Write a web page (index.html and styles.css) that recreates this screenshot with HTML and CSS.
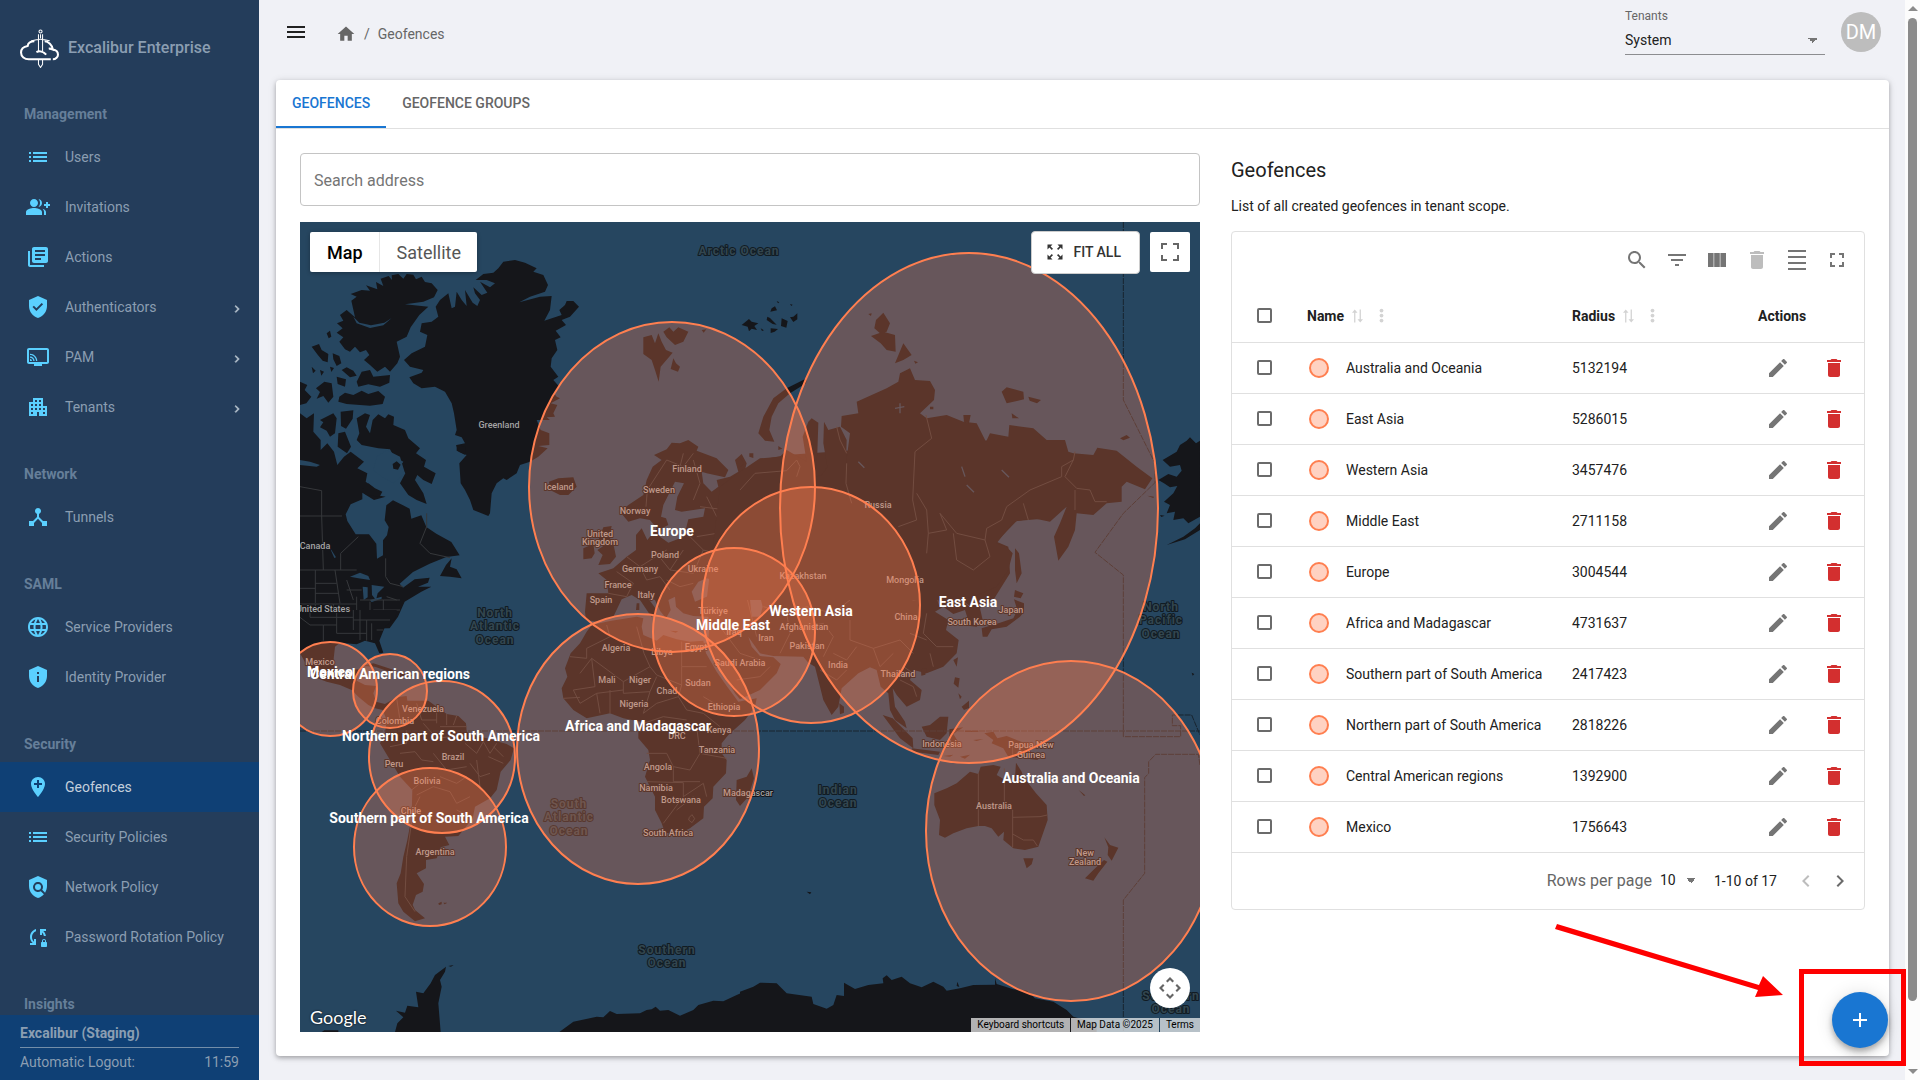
FILE: index.html
```html
<!DOCTYPE html>
<html lang="en">
<head>
    <meta charset="UTF-8">
    <meta name="viewport" content="width=device-width, initial-scale=1.0">
    <title>Geofences</title>
    <link rel="stylesheet" href="styles.css">
</head>
<body>
<svg class="sprite" aria-hidden="true">
    <symbol id="i-menu" viewBox="0 0 24 24"><path d="M3 18h18v-2H3v2zm0-5h18v-2H3v2zm0-7v2h18V6H3z"/></symbol>
    <symbol id="i-home" viewBox="0 0 24 24"><path d="M10 20v-6h4v6h5v-8h3L12 3 2 12h3v8z"/></symbol>
    <symbol id="i-list" viewBox="0 0 24 24"><path d="M3 13h2v-2H3v2zm0 4h2v-2H3v2zm0-8h2V7H3v2zm4 4h14v-2H7v2zm0 4h14v-2H7v2zM7 7v2h14V7H7z"/></symbol>
    <symbol id="i-invite" viewBox="0 0 24 24"><path d="M22 9V7h-2v2h-2v2h2v2h2v-2h2V9zM8 12c2.21 0 4-1.79 4-4s-1.79-4-4-4-4 1.79-4 4 1.79 4 4 4zm0 1c-2.67 0-8 1.34-8 4v3h16v-3c0-2.66-5.33-4-8-4zm4.51-8.95C13.43 5.11 14 6.49 14 8s-.57 2.89-1.49 3.95C14.47 11.7 16 10.04 16 8s-1.53-3.7-3.49-3.95zm4.02 9.78C17.42 14.66 18 15.7 18 17v3h2v-3c0-1.45-1.59-2.51-3.47-3.17z"/></symbol>
    <symbol id="i-actions" viewBox="0 0 24 24"><path d="M4 6H2v14c0 1.1.9 2 2 2h14v-2H4V6zm16-4H8c-1.1 0-2 .9-2 2v12c0 1.1.9 2 2 2h12c1.1 0 2-.9 2-2V4c0-1.1-.9-2-2-2zm-1 9H9V9h10v2zm-4 4H9v-2h6v2zm4-8H9V5h10v2z"/></symbol>
    <symbol id="i-shield" viewBox="0 0 24 24"><path d="M12 1L3 5v6c0 5.55 3.84 10.74 9 12 5.16-1.26 9-6.45 9-12V5l-9-4zm-1.6 15l-3.9-3.9 1.4-1.4 2.5 2.5 5.3-5.3 1.4 1.4-6.7 6.7z"/></symbol>
    <symbol id="i-pam" viewBox="0 0 24 24"><path d="M21 3H3c-1.1 0-2 .9-2 2v12c0 1.1.9 2 2 2h5v2h8v-2h5c1.1 0 2-.9 2-2V5c0-1.1-.9-2-2-2zm0 14H3V5h18v12zM4 14v2h2c0-1.11-.89-2-2-2zm0-2.6v1.3c1.9 0 3.3 1.4 3.3 3.3h1.3c0-2.5-2.1-4.6-4.6-4.6zM4 8.7V10c3.3 0 6 2.7 6 6h1.3c0-4-3.3-7.3-7.3-7.3z"/></symbol>
    <symbol id="i-tenants" viewBox="0 0 24 24"><path d="M17 11V3H7v4H3v14h8v-4h2v4h8V11h-4zM7 19H5v-2h2v2zm0-4H5v-2h2v2zm0-4H5V9h2v2zm4 4H9v-2h2v2zm0-4H9V9h2v2zm0-4H9V5h2v2zm4 8h-2v-2h2v2zm0-4h-2V9h2v2zm0-4h-2V5h2v2zm4 12h-2v-2h2v2zm0-4h-2v-2h2v2z"/></symbol>
    <symbol id="i-tunnels" viewBox="0 0 24 24"><path d="M17 16l-4-4V8.82C14.16 8.4 15 7.3 15 6c0-1.66-1.34-3-3-3S9 4.34 9 6c0 1.3.84 2.4 2 2.82V12l-4 4H3v5h5v-3.05l4-4.2 4 4.2V21h5v-5h-4z"/></symbol>
    <symbol id="i-globe" viewBox="0 0 24 24"><path d="M11.99 2C6.47 2 2 6.48 2 12s4.47 10 9.99 10C17.52 22 22 17.52 22 12S17.52 2 11.99 2zm6.93 6h-2.95c-.32-1.25-.78-2.45-1.38-3.56 1.84.63 3.37 1.91 4.33 3.56zM12 4.04c.83 1.2 1.48 2.53 1.91 3.96h-3.82c.43-1.43 1.08-2.76 1.91-3.96zM4.26 14C4.1 13.36 4 12.69 4 12s.1-1.36.26-2h3.38c-.08.66-.14 1.32-.14 2 0 .68.06 1.34.14 2H4.26zm.82 2h2.95c.32 1.25.78 2.45 1.38 3.56-1.84-.63-3.37-1.9-4.33-3.56zm2.95-8H5.08c.96-1.66 2.49-2.93 4.33-3.56C8.81 5.55 8.35 6.75 8.03 8zM12 19.96c-.83-1.2-1.48-2.53-1.91-3.96h3.82c-.43 1.43-1.08 2.76-1.91 3.96zM14.34 14H9.66c-.09-.66-.16-1.32-.16-2 0-.68.07-1.35.16-2h4.68c.09.65.16 1.32.16 2 0 .68-.07 1.34-.16 2zm.25 5.56c.6-1.11 1.06-2.31 1.38-3.56h2.95c-.96 1.65-2.49 2.93-4.33 3.56zM16.36 14c.08-.66.14-1.32.14-2 0-.68-.06-1.34-.14-2h3.38c.16.64.26 1.31.26 2s-.1 1.36-.26 2h-3.38z"/></symbol>
    <symbol id="i-identity" viewBox="0 0 24 24"><path d="M12 1L3 5v6c0 5.55 3.84 10.74 9 12 5.16-1.26 9-6.45 9-12V5l-9-4zm-1 6h2v2h-2V7zm0 4h2v6h-2v-6z"/></symbol>
    <symbol id="i-pin" viewBox="0 0 24 24"><path d="M12 2C8.14 2 5 5.14 5 9c0 5.25 7 13 7 13s7-7.75 7-13c0-3.86-3.14-7-7-7zm4 8h-3v3h-2v-3H8V8h3V5h2v3h3v2z"/></symbol>
    <symbol id="i-policy" viewBox="0 0 24 24"><path d="M21 5l-9-4-9 4v6c0 5.55 3.84 10.74 9 12 2.3-.56 4.33-1.9 5.88-3.71l-3.12-3.12c-1.94 1.29-4.58 1.07-6.29-.64-1.95-1.95-1.95-5.12 0-7.07 1.95-1.95 5.12-1.95 7.07 0 1.71 1.71 1.92 4.35.64 6.29l2.9 2.9C20.29 15.69 21 13.38 21 11V5z"/><circle cx="12" cy="12" r="3"/></symbol>
    <symbol id="i-rotation" viewBox="0 0 24 24"><path d="M10 4.1v2.1C7.7 7 6 9.3 6 12c0 2 .9 3.600 2 4.700V14h2v6H4v-2h2.700C5 16.500 4 14.400 4 12c0-3.700 2.500-6.900 6-7.900zM14 4h6v2h-2.700c1.400 1.200 2.300 2.900 2.600 5h-2c-.3-1.500-1-2.700-1.900-3.600V10h-2zM20 17v-1c0-1.100-.9-2-2-2s-2 .9-2 2v1c-.6 0-1 .4-1 1v3c0 .6.4 1 1 1h4c.6 0 1-.4 1-1v-3c0-.6-.4-1-1-1zm-1 0h-2v-1c0-.6.400-1 1-1s1 .4 1 1z"/></symbol>
    <symbol id="i-chevron" viewBox="0 0 24 24"><path d="M10 6L8.590 7.410 13.170 12l-4.580 4.590L10 18l6-6z"/></symbol>
    <symbol id="i-search" viewBox="0 0 24 24"><path d="M15.500 14h-.790l-.280-.270C15.410 12.590 16 11.110 16 9.500 16 5.910 13.090 3 9.500 3S3 5.910 3 9.500 5.910 16 9.500 16c1.610 0 3.090-.590 4.230-1.570l.270.280v.790l5 4.990L20.490 19l-4.990-5zm-6 0C7.010 14 5 11.990 5 9.500S7.010 5 9.500 5 14 7.010 14 9.500 11.990 14 9.500 14z"/></symbol>
    <symbol id="i-filter" viewBox="0 0 24 24"><path d="M10 18h4v-2h-4v2zM3 6v2h18V6H3zm3 7h12v-2H6v2z"/></symbol>
    <symbol id="i-columns" viewBox="0 0 24 24"><path d="M3 5h5.600v14H3zM9.200 5h5.600v14H9.200zM15.400 5H21v14h-5.600z"/></symbol>
    <symbol id="i-delete" viewBox="0 0 24 24"><path d="M6 19c0 1.100.9 2 2 2h8c1.100 0 2-.9 2-2V7H6v12zM19 4h-3.500l-1-1h-5l-1 1H5v2h14V4z"/></symbol>
    <symbol id="i-density" viewBox="0 0 24 24"><path d="M3 2h18v2H3zM3 8h18v2H3zM3 14h18v2H3zM3 20h18v2H3z"/></symbol>
    <symbol id="i-fullscreen" viewBox="0 0 24 24"><path d="M7 14H5v5h5v-2H7v-3zm-2-4h2V7h3V5H5v5zm12 7h-3v2h5v-5h-2v3zM14 5v2h3v3h2V5h-5z"/></symbol>
    <symbol id="i-edit" viewBox="0 0 24 24"><path d="M3 17.250V21h3.750L17.810 9.940l-3.750-3.750L3 17.250zM20.710 7.040c.39-.39.39-1.020 0-1.410l-2.340-2.340c-.39-.39-1.020-.39-1.410 0l-1.830 1.830 3.750 3.750 1.830-1.830z"/></symbol>
    <symbol id="i-sort" viewBox="0 0 12 14"><path d="M2.300 14V3.500H0L3 0l3 3.500H3.700V14zM8.300 0v10.500H6L9 14l3-3.500H9.700V0z"/></symbol>
    <symbol id="i-more" viewBox="0 0 24 24"><circle cx="12" cy="4" r="3"/><circle cx="12" cy="12" r="3"/><circle cx="12" cy="20" r="3"/></symbol>
    <symbol id="i-fit" viewBox="0 0 24 24"><path d="M15 3l2.300 2.300-2.890 2.870 1.420 1.420L18.700 6.700 21 9V3zM3 9l2.300-2.300 2.870 2.890 1.420-1.420L6.700 5.300 9 3H3zm6 12l-2.300-2.300 2.890-2.870-1.420-1.420L5.300 17.300 3 15v6zm12-6l-2.300 2.300-2.870-2.890-1.420 1.420 2.890 2.870L15 21h6z"/></symbol>
    <symbol id="i-add" viewBox="0 0 24 24"><path d="M19 13h-6v6h-2v-6H5v-2h6V5h2v6h6v2z"/></symbol>
</svg>

<div class="layout">
    <aside class="sidebar">
        <div class="brand">
            <svg class="brand-logo" viewBox="0 0 38 38">
                <path class="cloud" d="M30 29.500H8.500C4.500 29.500 1 27 1 23s3-6 6.500-6.500C8 13 11 12 14 12M24 12c3.500 0 7.500 3.500 8 8-1.500-.8-3-1-4-.8M32 20c3.500.5 5 3 5 5s-2 4.500-5 4.500M16 22.500c3-1.500 7-.5 9.500 2.500"/>
                <path class="sword" d="M18 5v17M22 5v17M18 29.500v5l2 3 2-3v-5M11 11.500c3 0 5-1.500 9-1.500s6 1.500 9 1.500M20 5v4"/>
                <circle class="sword" cx="20" cy="2.500" r="1.500"/>
            </svg>
            <span>Excalibur Enterprise</span>
        </div>
        <nav>
            <h2 class="nav-title">Management</h2>
            <a class="nav-item" href="#"><svg class="icon"><use href="#i-list"/></svg>Users</a>
            <a class="nav-item" href="#"><svg class="icon"><use href="#i-invite"/></svg>Invitations</a>
            <a class="nav-item" href="#"><svg class="icon"><use href="#i-actions"/></svg>Actions</a>
            <a class="nav-item" href="#"><svg class="icon"><use href="#i-shield"/></svg>Authenticators<svg class="arrow"><use href="#i-chevron"/></svg></a>
            <a class="nav-item" href="#"><svg class="icon"><use href="#i-pam"/></svg>PAM<svg class="arrow"><use href="#i-chevron"/></svg></a>
            <a class="nav-item" href="#"><svg class="icon"><use href="#i-tenants"/></svg>Tenants<svg class="arrow"><use href="#i-chevron"/></svg></a>
            <h2 class="nav-title">Network</h2>
            <a class="nav-item" href="#"><svg class="icon"><use href="#i-tunnels"/></svg>Tunnels</a>
            <h2 class="nav-title">SAML</h2>
            <a class="nav-item" href="#"><svg class="icon"><use href="#i-globe"/></svg>Service Providers</a>
            <a class="nav-item" href="#"><svg class="icon"><use href="#i-identity"/></svg>Identity Provider</a>
            <h2 class="nav-title">Security</h2>
            <a class="nav-item active" href="#"><svg class="icon"><use href="#i-pin"/></svg>Geofences</a>
            <a class="nav-item" href="#"><svg class="icon"><use href="#i-list"/></svg>Security Policies</a>
            <a class="nav-item" href="#"><svg class="icon"><use href="#i-policy"/></svg>Network Policy</a>
            <a class="nav-item" href="#"><svg class="icon"><use href="#i-rotation"/></svg>Password Rotation Policy</a>
            <h2 class="nav-title">Insights</h2>
        </nav>
        <div class="session">
            <div class="session-name">Excalibur (Staging)</div>
            <div class="session-logout"><span>Automatic Logout:</span><span>11:59</span></div>
        </div>
    </aside>

    <main class="main">
        <header class="topbar">
            <button class="menu-button" type="button" aria-label="Toggle menu"><svg class="icon"><use href="#i-menu"/></svg></button>
            <div class="breadcrumb">
                <a href="#" aria-label="Home"><svg class="icon"><use href="#i-home"/></svg></a>
                <span>/</span>
                <span>Geofences</span>
            </div>
            <div class="tenant">
                <label for="tenant">Tenants</label>
                <select id="tenant"><option>System</option></select>
            </div>
            <div class="avatar">DM</div>
        </header>

        <section class="card">
            <div class="tabs">
                <button class="tab selected" type="button">GEOFENCES</button>
                <button class="tab" type="button">GEOFENCE GROUPS</button>
            </div>
            <div class="content">
                <div class="map-column">
                    <input class="search" type="text" placeholder="Search address" aria-label="Search address">
                    <div class="map">
                        <svg class="map-canvas" viewBox="300 222 900 810" preserveAspectRatio="xMidYMid slice">
                            <rect class="sea" x="300" y="222" width="900" height="810"/>

                            <!-- Arctic Canada, Greenland, North America -->
                            <g transform="translate(290 200) scale(.33333)">
                                <path class="land" d="M184 302L200 290 182 282 215 270 240 272 228 256 262 268 258 246 280 258 272 236 296 228 306 240 305 226 325 222 340 236 350 222 370 224 378 238 395 230 405 246 425 250 443 270 432 292 400 305 345 313 415 320 388 345 362 382 350 410 320 425 330 470 322 490 300 515 285 500 262 515 240 495 222 480 238 465 228 450 210 457 195 440 180 455 165 448 148 425 160 412 140 398 158 385 141 370 160 362 150 345 170 330 195 352Z"/>
                                <path class="land" d="M557 240L580 222 610 218 625 205 640 185 675 180 705 188 740 205 730 215 760 225 774 255 765 275 720 290 688 307 750 290 785 288 780 330 763 362 815 345 808 330 825 315 830 303 850 303 867 320 840 350 815 360 828 375 797 392 812 412 795 420 802 450 785 475 782 500 805 530 790 540 808 560 792 580 800 590 810 595 782 610 802 615 790 640 795 650 770 652 780 660 740 660 752 690 778 700 778 735 745 738 773 745 745 770 720 785 690 795 680 820 650 840 640 835 620 850 605 880 600 940 595 948 550 930 540 900 525 870 512 850 508 790 530 765 500 752 500 735 525 730 515 712 495 705 500 690 492 640 485 610 465 575 435 560 395 565 370 550 358 532 395 518 400 510 360 500 342 480 365 460 405 440 412 405 390 395 395 370 425 365 445 350 437 320 450 300 475 280 485 325 495 320 500 275 515 300 530 318 525 270 548 308 562 318 570 300 555 280 550 262 575 285 592 278 570 245 600 262 615 250 590 240Z"/>
                                <path class="land" d="M65 440l22-8 8 18 20 12 -2 25-15-5 -15-18zM128 460l20 8 6 22-14 8 -10-20zM110 400l10-8 4 18-8 5zM120 500l12 4 -8 12zM155 510l15-8 20 10 10 15-20 5zM200 545L215 515 240 510 250 530 300 525 298 548 270 560 235 553 205 560zM148 590L165 578 190 585 215 572 235 582 265 573 285 590 278 612 240 617 170 612 145 605zM78 565l25-20 22 5 5 40-15 18-15-20-20 8 10-20zM30 545l22 10 -8 15 20 20 -15 20 -19 5zM140 530l28 8 -3 22-22-8zM65 500l12 12-8 8zM90 510l12 5-8 12z"/>
                                <path class="land" d="M200 655L225 640 240 645 228 680 240 700 248 660 265 643 285 655 295 643 312 650 310 675 345 690 355 715 390 745 378 760 408 780 402 800 437 820 425 852 400 840 382 825 375 840 400 880 410 912 380 900 355 885 330 850 346 820 330 800 340 785 312 770 300 748 265 745 215 735 200 720 208 700Z"/>
                                <path class="land" d="M90 660l40-20 10 15-5 45-15 10-10-18-20-10 10-15zM152 635l38-4 -2 25-20 30 -15-8zM145 700l20-5 18 45-12 20-28-20zM30 640l20 15 22-15 -2 55 22 25 0 30 20-20 20 25 10 40 20-25 20-15 40 30-20 20 30 15 -5 25 20 15 10 25 30 5 -35 10-35-22 0 20-35 15-15 30 5 20 25 40 40 0 22 28 2 45 18-10 0-45 12-15 5-25-12-20 5-45 20-15 30 15 20 10 5 30 30-10 15 35 30 20 45 25 25 40-40 5-50 20-50 25-40 35 10 12 35-25 45-5-5 15-30 12 40 0-30 15-50 30-20 45-25 35-300 5z"/>
                                <path class="land" d="M450 1128L468 1095 485 1075 480 1100 500 1108 515 1135 480 1130ZM215 870l20-20 20 15 22 10 -8 15-40-5z"/>
                                <path class="water" d="M190 350l10 20 40 14 40-8 25-22 -22 14 -40 8 -35-8zM30 780l30 5 30 10-10 5-50-5zM290 750l40 20 15 50-35 30-35-20-25-20 10-40zM180 1130l30-12 25 10 5 12-35-5zM218 1160l15 2 0 30-12 8zM245 1155l38 5 -20 20-5 20-12-15zM240 1200l35-10 0 6-30 10zM118 1040l20 32-5 2z"/>
                                <path class="land" d="M308 792l12-8 12 10-8 15-14-3zM498 735l28 5 0 25-20-10z"/>
                                <path class="border" d="M30 860L95 872V948M30 948H156M95 948L100 1110M30 1110H200M152 1110V1060L205 1010M287 1075V1130L300 1150 340 1160M410 940V980L390 1030 420 1060 480 1073M76 1110V1210M76 1150H140M76 1180H145M135 1110L150 1210M30 1165H76M76 1212H200M170 1140L190 1200M210 1200H330M30 1212L76 1212V1260M130 1212V1260M200 1190V1260M240 1205V1230M290 1190L320 1200M250 1230H330M280 1200V1260M170 1170H215M60 1255H300"/>
                            </g>

                            <!-- Americas and Africa -->
                            <g transform="translate(290 610) scale(.33333)">
                                <path class="land" d="M30 0H320L316 25 285 50 275 75 268 92 280 128 268 130 255 100 225 92 200 103 150 98 135 110 130 155 140 190 175 195 185 180 205 178 200 212 225 225 258 228 250 250 258 275 285 282 320 262 350 258 352 272 415 272 440 290 470 312 505 318 528 340 530 365 550 375 590 385 650 402 672 415 662 450 632 485 620 540 600 565 555 590 548 625 520 660 505 678 465 680 478 705 452 712 440 745 408 750 408 775 380 790 402 822 398 845 378 855 368 885 375 900 405 925 375 934 340 905 325 880 320 820 332 790 340 740 352 690 365 620 367 540 330 500 300 450 270 400 285 370 290 330 278 300 255 295 235 285 205 260 185 240 150 225 110 215 70 200 50 165 30 130Z"/>
                                <path class="land" d="M218 168L250 160 312 180 300 186 255 170ZM318 190l30-4 20 12-45 4zM445 880l10-5 0 8-8 2zM460 878l12 0-8 5zM645 915l12 6z"/>
                                <path class="border" d="M30 22L60 45H100V92M60 0V22H190M100 45H140M140 0V70M190 0V60M140 70H230M210 0V90M230 30V92M245 40V90M190 30H300M260 60H280M320 265L330 330 285 345M380 280L395 330 440 330M440 290V340M470 312V345M500 318L490 345M330 430L375 425 395 450 430 455M300 410L350 400 350 360M400 340L440 385 520 375M450 350L530 350M525 400L560 430 580 395 600 430 620 400M540 460L570 500 600 490M380 555L430 530 480 545 500 580 540 560M500 600L540 620M390 560L370 600 350 740 345 860 375 905M365 540L390 520M430 430L470 480 530 470M450 500L500 520 530 500M610 410L640 440M595 440L640 460M560 450L570 530"/>
                                <path class="land" d="M315 1266L322 1240 340 1222 318 1202 345 1208 352 1187 385 1192 378 1145 400 1150 422 1120 435 1095 468 1070 465 1085 450 1110 455 1130 445 1180 452 1266ZM475 1068l16-3-8 5zM95 1266l8-5h42v5zM420 1092l4-6z"/>
                                <path class="land" d="M808 1266L850 1235 920 1220 940 1222 960 1203 980 1212 1050 1210 1070 1200 1085 1198 1097 1190 1110 1202 1135 1200 1170 1217 1210 1200 1225 1185 1270 1172 1300 1174 1340 1155 1380 1138V1266Z"/>
                                <path class="land" d="M905 45L960 33 1040 20 1060 25 1055 50 1060 75 1100 92 1120 75 1160 88 1200 95 1240 92 1248 130 1280 185 1310 228 1345 275 1400 265 1395 290 1365 330 1315 375 1295 400 1295 430 1310 450 1308 490 1270 530 1268 565 1242 590 1240 625 1200 655 1165 672 1125 668 1115 640 1095 600 1095 560 1065 500 1080 450 1075 420 1045 385 1045 355 1052 335 1000 325 960 310 890 325 850 300 820 265 815 235 832 200 825 175 842 130 870 100 890 65Z"/>
                                <path class="land" d="M1340 510L1370 500 1385 475 1392 505 1375 560 1350 588 1338 570Z"/>
                                <path class="border" d="M840 140L890 145V115L960 80 950 45M905 145L1000 215 1080 170 1062 130 1040 50M905 145L915 230 850 240M1080 170L1100 195 1175 225M1175 95V170H1250M1175 170V225L1165 260 1190 300 1240 310M850 240L870 280 920 250 1000 240M920 250L930 310M960 240V310M1000 215V250L1080 245 1100 200M1080 245L1060 310 1100 280 1165 260M1060 340L1120 320 1190 330M1070 430L1130 430 1150 470 1200 480 1230 430 1220 350M1150 470L1150 515 1230 515M1070 515L1180 518V560L1150 600 1120 640M1180 560L1240 520 1250 560M1230 430L1310 445M1240 310L1290 350M1160 600L1210 560M1240 260L1290 290M870 190L905 145M820 265L870 262"/>
                                <path class="border" d="M1198 622l8-8 8 12-8 12-10-8z"/>
                            </g>

                            <!-- Europe and southern Asia -->
                            <g transform="translate(560 440) scale(.33333)">
                                <path class="land" d="M180 215L205 195 250 165 260 120 278 80 305 60 282 45 320 28 335 8 360 10 385 0 415 20 410 32 470 55 505 90 495 112 440 100 425 95 430 130 455 155 475 140 470 120 510 110 535 95 525 60 545 42 560 70 555 90 600 60 680 45 1440-10 1440 237 1370 243 1310 305 1345 320 1350 400 1300 480 1260 505 1268 540 1250 560 1230 558 1215 510 1180 522 1150 500 1125 515 1165 540 1158 570 1196 600 1190 640 1150 680 1100 700 1060 690 1050 720 1085 750 1080 780 1040 800 1010 765 998 745 1005 800 1035 845 1040 865 1005 840 990 810 985 760 962 740 950 690 930 682 895 700 845 745 835 800 815 825 790 780 765 680 745 668 730 650 640 648 600 640 565 590 575 620 600 648 640 652 662 672 650 700 600 750 540 778 525 760 495 710 455 640 445 600 448 560 445 530 400 528 370 520 348 500 345 470 325 480 332 510 318 535 300 512 285 480 262 472 290 510 275 532 240 480 215 465 185 478 160 530 110 545 78 540 75 515 80 460 145 460 140 420 115 400 160 385 200 350 228 330 228 285 245 265 262 300 290 265 270 240 240 235 205 245Z"/>
                                <path class="land" d="M130 262L155 258 148 290 162 320 168 350 150 372 115 375 128 345 112 330 130 318 115 300ZM70 325L100 312 104 340 95 355 70 358ZM-33 125L-5 115 40 112 50 140 25 165 0 165-30 150ZM230 490h8v20h-10zM330 572l25 2-8 4z"/>
                                <path class="land" d="M1392 490L1362 478 1372 510 1360 535 1320 548 1265 565 1268 590 1282 590 1295 568 1340 560 1380 530 1392 515ZM1365 450l25 10-8 15-20-5zM1365 325l12 15 8 60-15 30-5-40zM1180 660l14-8-4 28zM1083 688l18-4-5 20-12 3zM838 790l14 10 0 18-12 5zM968 825l30 10 60 60 2 30-40-30zM1055 925l85 10-5 10-75-10zM1085 860l25-5 30-25 25 0-5 50-20 20-40-10zM1168 868l42-6-30 20 15 25-12 8-15-20zM1185 712l14 3-4 28-14-12zM1205 800l22-18 0 22-15 6zM1195 760l10 10-5 8zM1235 865l8 15z"/>
                                <path class="water" d="M345 125L372 130 352 170 345 210 365 215 435 205 430 230 385 238 372 290 325 308 300 290 305 265 325 255 318 235 303 230 310 195ZM395 455L415 425 440 415 480 425 500 460 490 480 440 470 405 485ZM560 435L590 420 610 435 598 460 608 500 600 530 575 530 570 480ZM780 435l8-10 40-5 0 4zM1055 360l25-30 8-30 2 5-10 35z"/>
                                <path class="border" d="M258 200L262 150 320 60 370 80 400 40M400 60L420 130 400 180M360 80L370 40M200 350L240 380 260 420 300 410M145 460L200 470 220 430 170 395M240 380L320 330M290 340L330 390 370 330M320 420L360 440 400 430M330 390L400 400 430 330 380 280M300 410L330 450M410 290L470 280 500 240 560 230 600 300 560 370 500 390 490 420M430 330L500 350 540 320 600 340M420 200L500 210 540 150 600 180 660 150 700 60 720 90M440 170L470 230 530 250M560 120L600 95H680M600 180L620 240 680 250 700 320 660 380 610 420M640 210L700 200 720 260M700 320L740 350 790 300 850 320 870 350 910 340 900 290 860 230 800 210M760 160L830 190 870 160 890 200 920 290 980 250 1000 300 1040 330 1080 310 1120 340 1200 300 1240 330 1300 300 1320 230 1350 200 1440 150M1080 310L1100 350 1170 360 1200 400 1240 440 1280 380 1300 330M830 30L860 100 855 160M1060 60L1075 150 1060 250M700 440L760 420 820 460 860 450 890 390 960 450 1060 480 1130 470 1200 400M890 390L830 400 780 430M610 500L680 520 740 500 820 520 870 480M680 520L690 580 660 640M740 560L790 550 820 590 790 650M870 540L870 600 940 625 1020 600 1060 640M940 625L960 680 1000 640M820 640L860 660 890 620M780 690L830 720 860 690M1030 680L1060 700M1020 720L1060 740 1070 770M1100 520L1090 580 1130 620 1180 620M1050 580L1100 600M1110 640L1120 680M500 470L560 470 590 590M480 560L540 640 600 660M530 720L600 710 630 680M440 500L500 510M1130 470L1140 500M1180 460L1230 500M640 470L700 480M660 400L740 400 800 380M500 400L560 380 540 440"/>
                            </g>

                            <!-- Siberia, Arctic islands, Alaska -->
                            <g transform="translate(740 200) scale(.33333)">
                                <path class="land" d="M-60 860L0 815 60 775 120 770 140 750 200 785 188 710 205 665 215 655 235 668 232 760 225 830 245 825 262 800 250 730 252 665 265 690 300 680 320 720 318 790 330 700 303 680 305 648 355 640 350 605 440 565 475 545 480 520 510 505 525 540 570 543 585 570 582 600 540 640 560 655 620 645 670 665 710 670 738 725 750 700 805 710 808 675 880 685 920 720 975 720 985 755 1000 760 1060 765 1072 743 1130 752 1190 800 1237 835 1215 868 1160 845 1145 860 1145 905 1100 910 1060 945 1010 940 1005 990 985 1040 955 1082 942 1010 960 970 980 920 930 965 880 955 820 965 770 1030 800 1040 818 1060 805 1110 770 1160 700 1190 650 1200-100 1200Z"/>
                                <path class="land" d="M430 338L450 370 440 395 420 400 403 385 408 360ZM393 408L430 395 465 405 467 455 440 450 422 430ZM490 430L515 465 490 480 465 490ZM522 482l12 5-8 4zM785 575L800 562 850 575 852 598 800 610ZM865 590l38 10-12 10-22-8zM815 640l22 15-20 0zM670 645l22 0-5 25-15-5zM1140 715l20-10 10 8-20 8zM570 620l10 0 0 8-10 0zM385 342l10-2-2 8zM55 700L70 650 100 595 140 565 200 535 198 550 150 580 115 610 95 650 88 690 103 725 75 722ZM28 760l12 0 0 14-12-4zM0 775l12 15-12 12zM115 738l12 8-12 4zM1222 887l20 3-2 4z"/>
                                <path class="land" d="M5 375l22-18 8 8 20 5-12 8 8 12-16-4-8 8-4-14zM82 350l8 4 20 20-12-2-18-12zM95 325l10-6 6 12-20 4zM125 355l18 8-4 20-16-5zM150 352l10-2 12-10 0 18-12 8zM110 303l8 4-4 3zM150 312l8 2-4 4zM92 385l22 2-10 8-12 4zM62 385l10 6-6 2z"/>
                                <path class="land" d="M1380 722L1368 730 1350 712 1340 722 1320 735 1310 755 1268 780 1290 800 1320 795 1325 812 1310 830 1285 822 1255 840 1272 850 1290 862 1312 858 1300 880 1272 905 1290 915 1280 940 1305 935 1300 960 1330 955 1345 970 1380 950ZM1380 970L1365 985 1330 1010 1280 1035 1335 1018 1380 990ZM1260 945l14 2-10 4z"/>
                                <path class="border" d="M558 645L575 715 525 755 518 900 530 960 475 980M530 880L560 930 565 1000 620 990 600 940 650 1000 735 1020 740 985 785 960 800 920 870 870 965 830 965 800 1000 780 1005 755M1000 780L975 830 1010 865 1050 870 1065 905 1100 905M1005 870V930M320 790L318 850 335 910M290 680L300 720 320 760M0 870L45 820 140 812 170 780 180 800 170 830M565 1000L560 1060M735 1020L750 1070 700 1110 650 1080 640 1000M850 910L865 960"/>
                                <path class="lake" d="M665 800l10 30M680 855l22 22M785 810l22 22M480 610v30M465 625l28-5M355 785l18 18"/>
                                <path class="meridian" d="M1150 66V600L1195 690 1245 790V848L1150 940 1065 1057 1150 1125V1610H1322V1577H1297V1545H1355L1380 1605M1380 1695L1375 1663H1247L1226 1685V1720L1214 1733V2020L1150 2100V2496"/>
                            </g>

                            <!-- Oceania and Antarctica -->
                            <g transform="translate(740 610) scale(.33333)">
                                <path class="land" d="M583 550L620 535 650 520 690 485 715 492 722 470 760 465 782 470 770 495 812 520 825 500 828 458 845 485 850 500 888 550 920 585 923 630 895 710 855 720 820 715 790 690 792 665 775 680 755 655 735 648 715 648 680 655 640 670 615 683 597 675 600 630 583 585Z"/>
                                <path class="land" d="M850 745l30 0-5 18-15 12zM1093 682L1110 705 1135 713 1115 752 1103 735 1105 712ZM1092 750L1102 755 1075 790 1060 812 1035 805 1060 780ZM733 370L760 365 772 385 800 378 855 400 870 425 895 450 850 445 805 440 790 415 755 400 760 390ZM675 362h40v4h-40zM700 390l30-3-20 6zM610 438l30-4-10 6zM660 440l30-6-15 12zM1016 540l20 16-4 2zM1355 188l8 4-5 5zM200 845l14 2-4 6z"/>
                                <path class="land" d="M0 1266V1145L40 1130 60 1118 110 1120 140 1150 215 1160 220 1182 260 1196 280 1185 290 1155 312 1158 312 1118 345 1137 385 1125 430 1120 428 1105 440 1096 455 1110 485 1100 510 1120 545 1132 580 1115 610 1130 620 1142 660 1135 700 1125 765 1124 765 1105 770 1122 820 1138 860 1142 885 1165 940 1175 980 1200 1000 1220 1070 1240V1266ZM652 1115l6 16-8-3z"/>
                                <path class="border" d="M715 490V648M793 475V590L818 600V712M818 622L900 620 922 615M818 672L850 690 880 690 892 708M818 395V440"/>
                            </g>
                            <path class="meridian" d="M300 731H1200"/>
                            <!-- Svalbard -->
                            <g class="land" transform="translate(290 200) scale(.33333)">
                                <path d="M1060 412L1085 405 1095 430 1105 400 1115 425 1128 450 1148 458 1112 500 1106 545 1095 510 1085 480 1060 462ZM1120 395L1138 382 1150 395 1165 382 1195 395 1180 425 1155 435 1130 412ZM1150 475l8 15 12 10-6 15-22-8zM1235 390l14-2-8 10z"/>
                            </g>

                            <g class="ocean-label">
                                <text x="739" y="255">Arctic Ocean</text>
                                <text x="495" y="617">North</text><text x="495" y="630">Atlantic</text><text x="495" y="644">Ocean</text>
                                <text x="569" y="808">South</text><text x="569" y="821">Atlantic</text><text x="569" y="835">Ocean</text>
                                <text x="667" y="954">Southern</text><text x="667" y="967">Ocean</text>
                                <text x="838" y="794">Indian</text><text x="838" y="807">Ocean</text>
                                <text x="1161" y="611">North</text><text x="1161" y="624">Pacific</text><text x="1161" y="638">Ocean</text>
                                <text x="1171" y="1000">Southern</text><text x="1171" y="1013">Ocean</text>
                            </g>
                            <g class="country-label">
                                <text x="499" y="428">Greenland</text><text x="559" y="490">Iceland</text><text x="687" y="472">Finland</text>
                                <text x="659" y="493">Sweden</text><text x="635" y="514">Norway</text><text x="600" y="537">United</text>
                                <text x="600" y="545">Kingdom</text><text x="665" y="558">Poland</text><text x="640" y="572">Germany</text>
                                <text x="703" y="572">Ukraine</text><text x="618" y="588">France</text><text x="601" y="603">Spain</text>
                                <text x="646" y="598">Italy</text><text x="713" y="614">Türkiye</text><text x="315" y="549">Canada</text>
                                <text x="323" y="612">United States</text><text x="878" y="508">Russia</text><text x="803" y="579">Kazakhstan</text>
                                <text x="905" y="583">Mongolia</text><text x="1011" y="613">Japan</text><text x="906" y="620">China</text>
                                <text x="972" y="625">South Korea</text><text x="804" y="630">Afghanistan</text><text x="766" y="641">Iran</text>
                                <text x="734" y="635">Iraq</text><text x="807" y="649">Pakistan</text><text x="838" y="668">India</text>
                                <text x="898" y="677">Thailand</text><text x="942" y="747">Indonesia</text><text x="1031" y="748">Papua New</text>
                                <text x="1031" y="758">Guinea</text><text x="994" y="809">Australia</text><text x="1085" y="856">New</text>
                                <text x="1085" y="865">Zealand</text><text x="320" y="665">Mexico</text><text x="423" y="712">Venezuela</text>
                                <text x="395" y="724">Colombia</text><text x="453" y="760">Brazil</text><text x="394" y="767">Peru</text>
                                <text x="427" y="784">Bolivia</text><text x="411" y="814">Chile</text><text x="435" y="855">Argentina</text>
                                <text x="616" y="651">Algeria</text><text x="662" y="655">Libya</text><text x="696" y="650">Egypt</text>
                                <text x="607" y="683">Mali</text><text x="640" y="683">Niger</text><text x="667" y="694">Chad</text>
                                <text x="634" y="707">Nigeria</text><text x="698" y="686">Sudan</text><text x="724" y="710">Ethiopia</text>
                                <text x="677" y="739">DRC</text><text x="719" y="733">Kenya</text><text x="717" y="753">Tanzania</text>
                                <text x="658" y="770">Angola</text><text x="656" y="791">Namibia</text><text x="681" y="803">Botswana</text>
                                <text x="668" y="836">South Africa</text><text x="748" y="796">Madagascar</text><text x="740" y="666">Saudi Arabia</text>
                            </g>

                            <g class="fence">
                                <ellipse cx="1071" cy="831" rx="145" ry="170"/>
                                <ellipse cx="969" cy="508" rx="189" ry="255"/>
                                <ellipse cx="811" cy="605" rx="109" ry="118"/>
                                <ellipse cx="734" cy="632" rx="81" ry="84"/>
                                <ellipse cx="672" cy="487" rx="143" ry="165"/>
                                <ellipse cx="638" cy="749" rx="121" ry="135"/>
                                <ellipse cx="430" cy="847" rx="76" ry="79"/>
                                <ellipse cx="442" cy="757" rx="73" ry="76"/>
                                <ellipse cx="390" cy="691" rx="37" ry="37"/>
                                <ellipse cx="330" cy="689" rx="47" ry="47"/>
                            </g>
                            <g class="fence-label">
                                <text x="672" y="536">Europe</text>
                                <text x="968" y="607">East Asia</text>
                                <text x="811" y="616">Western Asia</text>
                                <text x="733" y="630">Middle East</text>
                                <text x="638" y="731">Africa and Madagascar</text>
                                <text x="1071" y="783">Australia and Oceania</text>
                                <text x="330" y="677">Mexico</text>
                                <text x="390" y="679">Central American regions</text>
                                <text x="441" y="741">Northern part of South America</text>
                                <text x="429" y="823">Southern part of South America</text>
                            </g>
                        </svg>
                        <div class="map-type">
                            <button class="current" type="button">Map</button>
                            <button type="button">Satellite</button>
                        </div>
                        <div class="map-tools">
                            <button class="fit-all" type="button"><svg><use href="#i-fit"/></svg>FIT ALL</button>
                            <button class="map-fullscreen" type="button" aria-label="Toggle fullscreen view">
                                <svg viewBox="0 0 18 18"><path d="M0 0v6h2V2h4V0zM16 0h-4v2h4v4h2V0zM16 16h-4v2h6v-6h-2zM2 12H0v6h6v-2H2z"/></svg>
                            </button>
                        </div>
                        <button class="camera" type="button" aria-label="Map camera controls">
                            <svg viewBox="0 0 24 24"><path d="M12 1l4 4-1.500 1.500L12 4 9.500 6.500 8 5zM12 23l-4-4 1.500-1.500L12 20l2.500-2.500L16 19zM1 12l4-4 1.500 1.500L4 12l2.500 2.500L5 16zM23 12l-4 4-1.500-1.500L20 12l-2.500-2.500L19 8z"/></svg>
                        </button>
                        <span class="google">Google</span>
                        <div class="attribution">
                            <button type="button">Keyboard shortcuts</button><span>Map Data ©2025</span><a href="#">Terms</a>
                        </div>
                    </div>
                </div>

                <div class="list-column">
                    <h1>Geofences</h1>
                    <p>List of all created geofences in tenant scope.</p>
                    <div class="table-box">
                        <div class="toolbar">
                            <button type="button" aria-label="Search"><svg><use href="#i-search"/></svg></button>
                            <button type="button" aria-label="Filters"><svg><use href="#i-filter"/></svg></button>
                            <button type="button" aria-label="Columns"><svg><use href="#i-columns"/></svg></button>
                            <button type="button" aria-label="Delete selected" disabled><svg><use href="#i-delete"/></svg></button>
                            <button type="button" aria-label="Density"><svg><use href="#i-density"/></svg></button>
                            <button type="button" aria-label="Full screen"><svg><use href="#i-fullscreen"/></svg></button>
                        </div>
                        <table>
                            <colgroup><col class="col-check"><col><col class="col-radius"><col class="col-actions"></colgroup>
                            <thead>
                            <tr>
                                <th><input type="checkbox" aria-label="Select all"></th>
                                <th><div class="head">Name<svg class="sort"><use href="#i-sort"/></svg><svg class="more"><use href="#i-more"/></svg></div></th>
                                <th><div class="head">Radius<svg class="sort"><use href="#i-sort"/></svg><svg class="more"><use href="#i-more"/></svg></div></th>
                                <th>Actions</th>
                            </tr>
                            </thead>
                            <tbody id="geofences"></tbody>
                        </table>
                        <div class="pagination">
                            <label for="rows">Rows per page</label>
                            <select id="rows"><option>10</option></select>
                            <span>1-10 of 17</span>
                            <button class="prev" type="button" aria-label="Previous page" disabled><svg><use href="#i-chevron"/></svg></button>
                            <button type="button" aria-label="Next page"><svg><use href="#i-chevron"/></svg></button>
                        </div>
                    </div>
                </div>
            </div>
        </section>
    </main>

    <div class="scrollbar" aria-hidden="true">
        <i class="scroll-up"></i>
        <i class="scroll-thumb"></i>
        <i class="scroll-down"></i>
    </div>
</div>

<button class="fab" type="button" aria-label="Add geofence"><svg><use href="#i-add"/></svg></button>
<div class="highlight"></div>
<svg class="pointer" viewBox="0 0 228 76" aria-hidden="true">
    <path d="M2 0L204 61 208 52 228 71 200 73 203 66 0 5z"/>
</svg>

<script>
    const geofences = [
        ["Australia and Oceania", 5132194],
        ["East Asia", 5286015],
        ["Western Asia", 3457476],
        ["Middle East", 2711158],
        ["Europe", 3004544],
        ["Africa and Madagascar", 4731637],
        ["Southern part of South America", 2417423],
        ["Northern part of South America", 2818226],
        ["Central American regions", 1392900],
        ["Mexico", 1756643]
    ];

    document.getElementById("geofences").innerHTML = geofences.map(([name, radius]) => `
        <tr>
            <td><input type="checkbox" aria-label="Select ${name}"></td>
            <td><div class="name"><i class="dot"></i>${name}</div></td>
            <td>${radius}</td>
            <td>
                <div class="actions">
                    <button type="button" aria-label="Edit ${name}"><svg><use href="#i-edit"/></svg></button>
                    <button class="delete" type="button" aria-label="Delete ${name}"><svg><use href="#i-delete"/></svg></button>
                </div>
            </td>
        </tr>`).join("");
</script>
</body>
</html>
```
FILE: styles.css
```css
* {
    box-sizing: border-box;
}

body {
    margin: 0;
    background: #f0f1f6;
    color: #212121;
    font-family: Roboto, "Liberation Sans", sans-serif;
    font-size: 14px;
    line-height: 20px;
}

button {
    border: none;
    padding: 0;
    background: none;
    color: inherit;
    font: inherit;
    cursor: pointer;
}

a {
    color: inherit;
    text-decoration: none;
}

svg {
    display: block;
    fill: currentColor;
}

.sprite {
    display: none;
}

.icon {
    width: 24px;
    height: 24px;
    flex: none;
}

.layout {
    display: flex;
    min-height: 100vh;
}

/* Sidebar */
.sidebar {
    position: sticky;
    top: 0;
    display: flex;
    flex-direction: column;
    flex: none;
    width: 259px;
    height: 100vh;
    background: #243d5b;
    color: #8b9eb2;
}

.sidebar nav {
    flex: 1;
    min-height: 0;
    overflow: hidden;
}

.brand {
    display: flex;
    align-items: center;
    gap: 9px;
    padding: 24px 20px 0;
    height: 72px;
    flex: none;
    font-size: 16px;
    font-weight: 500;
}

.brand-logo {
    width: 39px;
    height: 39px;
    fill: none;
    stroke: #fff;
}

.cloud {
    stroke-width: 2;
}

.sword {
    stroke-width: 1;
}

.nav-title {
    margin: 0;
    padding: 32px 24px 8px;
    color: #667f99;
    font-size: 14px;
    font-weight: 700;
}

.nav-item {
    display: flex;
    align-items: center;
    gap: 15px;
    height: 50px;
    padding: 0 15px 0 26px;
}

.nav-item .icon {
    color: #5bd0ff;
}

.nav-item .arrow {
    width: 14px;
    height: 14px;
    margin-left: auto;
    margin-top: 4px;
    color: #b9c4cf;
    stroke: currentColor;
    stroke-width: 1;
}

.nav-item.active {
    background: #0f4075;
    color: #c3cfdc;
}

.session {
    flex: none;
    height: 65px;
    padding: 8px 20px 0;
    background: #0f4075;
}

.session-name {
    padding-bottom: 4px;
    border-bottom: 1px solid #738ea9;
    font-weight: 700;
}

.session-logout {
    display: flex;
    justify-content: space-between;
    padding-top: 4px;
}

/* Header */
.main {
    flex: 1;
    min-width: 0;
    padding: 0 16px 24px 17px;
}

.topbar {
    display: flex;
    align-items: flex-start;
    height: 80px;
    padding: 0 8px;
}

.menu-button {
    margin-top: 20px;
}

.breadcrumb {
    display: flex;
    align-items: center;
    gap: 8px;
    height: 24px;
    margin: 22px auto 0 28px;
    color: #666;
}

.breadcrumb .icon {
    width: 20px;
    height: 20px;
}

.tenant {
    width: 200px;
    margin-right: 16px;
}

.tenant label {
    display: block;
    margin-top: 6px;
    color: #666;
    font-size: 12px;
}

.tenant select,
.pagination select {
    appearance: none;
    border: none;
    border-radius: 0;
    color: #212121;
    font: inherit;
    background: linear-gradient(to bottom left, #757575 50%, transparent 50%) right 12px center / 5px 5px no-repeat,
        linear-gradient(to bottom right, #757575 50%, transparent 50%) right 7px center / 5px 5px no-repeat;
}

.tenant select {
    width: 100%;
    height: 29px;
    padding: 0;
    border-bottom: 1px solid #8c8d90;
}

.avatar {
    width: 40px;
    height: 40px;
    margin-top: 12px;
    border-radius: 50%;
    background: #bdbdbd;
    color: #fff;
    font-size: 20px;
    line-height: 40px;
    text-align: center;
}

/* Card */
.card {
    border-radius: 4px;
    background: #fff;
    box-shadow: 0 2px 4px rgba(0, 0, 0, 0.25), 0 1px 8px rgba(0, 0, 0, 0.12);
}

.tabs {
    display: flex;
    border-bottom: 1px solid #e0e0e0;
}

.tab {
    height: 48px;
    padding: 0 16px;
    border-bottom: 2px solid transparent;
    color: #666;
    font-weight: 500;
}

.tab.selected {
    border-color: #1976d2;
    color: #1976d2;
}

.content {
    display: grid;
    grid-template-columns: 900fr 634fr;
    gap: 31px;
    padding: 24px;
}

.search {
    display: block;
    width: 100%;
    height: 53px;
    margin-bottom: 16px;
    padding: 2px 13px 0;
    border: 1px solid #c4c4c4;
    border-radius: 4px;
    font: inherit;
    font-size: 16px;
}

.search::placeholder {
    color: #757575;
}

/* Map */
.map {
    position: relative;
    overflow: hidden;
}

.map-canvas {
    width: 100%;
    aspect-ratio: 10 / 9;
}

.sea,
.water {
    fill: #264660;
}

.land {
    fill: #15161a;
}

.border {
    fill: none;
    stroke: #36383b;
    stroke-width: 3;
}

.lake {
    fill: none;
    stroke: #264660;
    stroke-width: 4;
}

.meridian {
    fill: none;
    stroke: #18242f;
    stroke-width: 1;
    stroke-dasharray: 6 1;
    vector-effect: non-scaling-stroke;
}

.map-canvas text {
    text-anchor: middle;
    paint-order: stroke;
    stroke-linejoin: round;
}

.ocean-label {
    fill: #33464f;
    stroke: #111b23;
    stroke-width: 2px;
    font-size: 12px;
    font-weight: 700;
    letter-spacing: 1px;
}

.country-label {
    fill: #a4a4a4;
    stroke: #15161a;
    stroke-width: 2px;
    font-size: 9px;
    font-weight: 500;
}

.fence {
    fill: rgba(255, 127, 80, 0.3);
    stroke: #ff7f50;
    stroke-width: 2;
}

.fence-label {
    fill: #fff;
    font-size: 14px;
    font-weight: 700;
}

.map-type {
    position: absolute;
    top: 10px;
    left: 10px;
    display: flex;
    height: 40px;
    border-radius: 2px;
    background: #fff;
    box-shadow: 0 1px 4px rgba(0, 0, 0, 0.3);
    color: #565656;
    font-size: 18px;
}

.map-type button {
    padding: 2px 16px 0 17px;
}

.map-type .current {
    border-right: 1px solid #e6e6e6;
    color: #000;
    font-weight: 500;
}

.map-tools {
    position: absolute;
    top: 10px;
    right: 10px;
    display: flex;
    align-items: center;
    gap: 10px;
    height: 40px;
}

.fit-all {
    display: flex;
    align-items: center;
    gap: 8px;
    height: 43px;
    padding: 0 18px 0 13px;
    border: 1px solid #ccc;
    border-radius: 4px;
    background: #fff;
    color: #333;
    font-weight: 500;
}

.fit-all svg {
    width: 20px;
    height: 20px;
}

.map-fullscreen {
    display: grid;
    place-items: center;
    width: 40px;
    height: 40px;
    border-radius: 2px;
    background: #fff;
    color: #666;
}

.map-fullscreen svg {
    width: 18px;
    height: 18px;
}

.camera {
    position: absolute;
    right: 10px;
    bottom: 24px;
    display: grid;
    place-items: center;
    width: 40px;
    height: 40px;
    border-radius: 50%;
    background: #fff;
    color: #666;
}

.camera svg {
    width: 24px;
    height: 24px;
}

.google {
    position: absolute;
    left: 10px;
    bottom: 5px;
    color: #fff;
    font-family: Lato, sans-serif;
    font-size: 18px;
    text-shadow: 0 0 2px #000;
}

.attribution {
    position: absolute;
    right: 0;
    bottom: 0;
    display: flex;
    gap: 1px;
    color: #000;
    font-size: 10px;
    line-height: 14px;
}

.attribution > * {
    padding: 0 6px;
    background: rgba(245, 245, 245, 0.7);
}

/* Geofence list */
.list-column h1 {
    margin: 5px 0 14px;
    font-size: 20px;
    font-weight: 400;
    line-height: 24px;
}

.list-column p {
    margin: 0 0 15px;
}

.table-box {
    border: 1px solid #e0e0e0;
    border-radius: 4px;
}

.toolbar {
    display: flex;
    align-items: center;
    justify-content: flex-end;
    height: 56px;
    padding-right: 7px;
    color: #757575;
}

.toolbar button {
    display: grid;
    place-items: center;
    width: 40px;
    height: 40px;
}

.toolbar button:disabled {
    color: #bdbdbd;
}

.toolbar svg,
.actions svg {
    width: 24px;
    height: 24px;
}

table {
    width: 100%;
    border-collapse: collapse;
    table-layout: fixed;
}

.col-check {
    width: 59px;
}

.col-radius {
    width: 186px;
}

.col-actions {
    width: 122px;
}

th,
td {
    height: 51px;
    padding: 0 0 0 16px;
    border-bottom: 1px solid #e0e0e0;
    text-align: left;
}

th {
    height: 54px;
    padding-top: 2px;
    font-weight: 700;
}

th:first-child,
td:first-child {
    padding-left: 25px;
}

input[type="checkbox"] {
    display: block;
    appearance: none;
    width: 15px;
    height: 15px;
    margin: 0;
    border: 2px solid #6b6b6b;
    border-radius: 2px;
}

.head,
.name,
.actions {
    display: flex;
    align-items: center;
}

.sort {
    width: 11px;
    height: 14px;
    margin-left: 8px;
    color: #d3d3d3;
}

.more {
    width: 15px;
    height: 15px;
    margin-left: 11px;
    color: #d3d3d3;
}

.name {
    gap: 17px;
    padding-left: 2px;
}

.dot {
    width: 20px;
    height: 20px;
    border: 2px solid #ff7f50;
    border-radius: 50%;
    background: #ffd2c2;
}

.actions {
    gap: 32px;
    padding-left: 8px;
    color: #757575;
}

.actions .delete {
    color: #d32f2f;
}

.pagination {
    display: flex;
    align-items: center;
    justify-content: flex-end;
    height: 56px;
    padding-right: 7px;
}

.pagination label {
    margin-right: 8px;
    color: #666;
    font-size: 16px;
}

.pagination select {
    width: 36px;
    margin-right: 18px;
    padding: 0 0 2px;
    background-position: right 5px center, right 0 center;
}

.pagination button {
    display: grid;
    place-items: center;
    width: 34px;
    height: 34px;
    color: #6b6b6b;
}

.pagination span {
    margin-right: 12px;
}

.pagination button:disabled {
    color: #bdbdbd;
}

.pagination svg {
    width: 24px;
    height: 24px;
}

.pagination .prev svg {
    transform: rotate(180deg);
}

/* Scrollbar */
.scrollbar {
    position: sticky;
    top: 0;
    display: flex;
    flex-direction: column;
    align-items: center;
    flex: none;
    width: 15px;
    height: 100vh;
    padding: 6px 0;
    background: #fcfcfc;
}

.scroll-up,
.scroll-down {
    border: 5px solid transparent;
}

.scroll-up {
    border-top: none;
    border-bottom-color: #8b8b8b;
}

.scroll-down {
    margin-top: auto;
    border-bottom: none;
    border-top-color: #8b8b8b;
}

.scroll-thumb {
    width: 9px;
    height: 92%;
    margin-top: 7px;
    border-radius: 5px;
    background: #8b8b8b;
}

/* Add button with its pointer */
.fab {
    position: fixed;
    right: 32px;
    bottom: 32px;
    display: grid;
    place-items: center;
    width: 56px;
    height: 56px;
    border-radius: 50%;
    background: #1976d2;
    box-shadow: 0 3px 5px rgba(0, 0, 0, 0.2), 0 6px 10px rgba(0, 0, 0, 0.14), 0 1px 18px rgba(0, 0, 0, 0.12);
    color: #fff;
}

.fab svg {
    width: 24px;
    height: 24px;
}

.highlight {
    position: fixed;
    right: 14px;
    bottom: 14px;
    width: 107px;
    height: 97px;
    border: 5px solid #fe0000;
    pointer-events: none;
}

.pointer {
    position: fixed;
    right: 137px;
    bottom: 80px;
    width: 228px;
    height: 76px;
    fill: #fe0000;
    pointer-events: none;
}
```
